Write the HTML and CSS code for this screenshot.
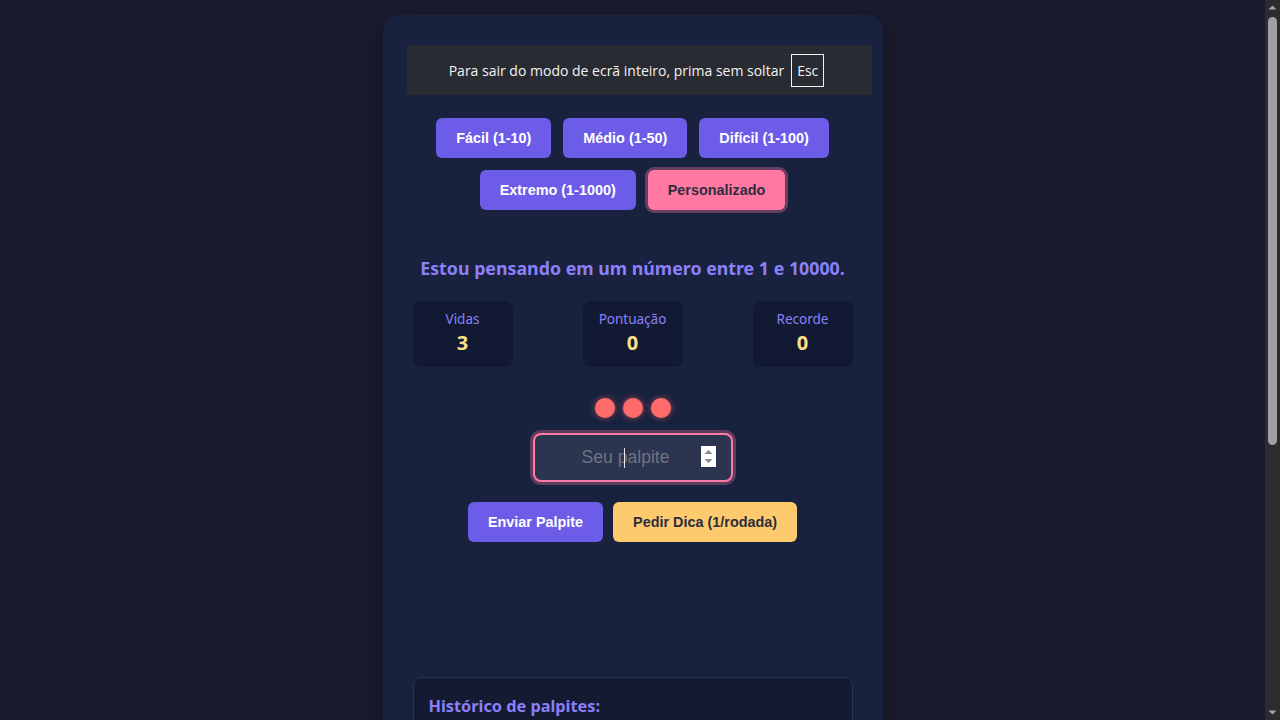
FILE: index.html
```html
<!DOCTYPE html>
<html lang="pt">
<head>
<meta charset="utf-8">
<title>Adivinhe o Número</title>
<link rel="stylesheet" href="styles.css">
</head>
<body>
<main class="card">
  <header class="card-head">
    <div class="fs-notice">Para sair do modo de ecrã inteiro, prima sem soltar <span class="key">Esc</span></div>
  </header>
  <div class="levels">
    <div class="level-row">
      <button class="btn btn-purple">Fácil (1-10)</button>
      <button class="btn btn-purple">Médio (1-50)</button>
      <button class="btn btn-purple">Difícil (1-100)</button>
    </div>
    <div class="level-row">
      <button class="btn btn-purple">Extremo (1-1000)</button>
      <button class="btn btn-pink">Personalizado</button>
    </div>
  </div>
  <p class="prompt">Estou pensando em um número entre 1 e 10000.</p>
  <div class="stats">
    <div class="stat"><span class="stat-label">Vidas</span><span class="stat-value">3</span></div>
    <div class="stat"><span class="stat-label">Pontuação</span><span class="stat-value">0</span></div>
    <div class="stat"><span class="stat-label">Recorde</span><span class="stat-value">0</span></div>
  </div>
  <div class="lives">
    <span class="life"></span><span class="life"></span><span class="life"></span>
  </div>
  <div class="guess-wrap">
    <div class="guess">
      <input class="guess-input" type="text" placeholder="Seu palpite">
      <span class="caret"></span>
      <span class="spinner">
        <svg width="15" height="21" viewBox="0 0 15 21"><rect width="15" height="21" fill="#fff"/><path d="M3.5 8 L7.5 4 L11.5 8 Z" fill="#8a8a8a"/><path d="M3.5 13 L7.5 17 L11.5 13 Z" fill="#8a8a8a"/></svg>
      </span>
    </div>
  </div>
  <div class="actions">
    <button class="btn btn-purple">Enviar Palpite</button>
    <button class="btn btn-yellow">Pedir Dica (1/rodada)</button>
  </div>
  <section class="history">
    <h2 class="history-title">Histórico de palpites:</h2>
    <ul class="history-list"></ul>
  </section>
</main>
<div class="scrollbar">
  <svg class="sb-arrow" width="15" height="15" viewBox="0 0 15 15"><path d="M3.5 9.5 L7.5 5.5 L11.5 9.5 Z" fill="#a3a3a3"/></svg>
  <div class="sb-track"><div class="sb-thumb"></div></div>
  <svg class="sb-arrow" width="15" height="15" viewBox="0 0 15 15"><path d="M3.5 5.5 L7.5 9.5 L11.5 5.5 Z" fill="#a3a3a3"/></svg>
</div>
</body>
</html>
```
FILE: styles.css
```css
html {
  background: #1b1b2f;
  scrollbar-width: none;
}
html::-webkit-scrollbar {
  display: none;
}
body {
  margin: 0;
  padding: 15px 15px 40px 0;
  background: #1b1b2f;
  font-family: "Noto Sans", "Liberation Sans", sans-serif;
  display: flex;
  justify-content: center;
}
.card {
  width: 500px;
  box-sizing: border-box;
  padding: 30px;
  background: #18213e;
  border-radius: 16px;
  box-shadow: 0 8px 24px rgba(0, 0, 0, 0.35);
  display: flex;
  flex-direction: column;
  align-items: stretch;
}
.card-head {
  height: 73px;
}
.fs-notice {
  position: fixed;
  left: 407px;
  top: 45px;
  width: 465px;
  height: 50px;
  background: #292b32;
  color: #f2f2f2;
  font-family: "Open Sans", "Noto Sans", sans-serif;
  font-size: 14px;
  display: flex;
  align-items: center;
  justify-content: center;
  gap: 7px;
  box-sizing: border-box;
  padding-right: 6px;
}
.key {
  border: 1px solid #f2f2f2;
  padding: 0 5px;
  height: 33px;
  display: flex;
  align-items: center;
  box-sizing: border-box;
}
.levels {
  display: flex;
  flex-direction: column;
  gap: 12px;
  align-items: center;
}
.level-row {
  display: flex;
  gap: 12px;
  justify-content: center;
}
.btn {
  height: 40px;
  padding: 0 20px;
  border: none;
  border-radius: 6px;
  font-family: "Liberation Sans", Arial, sans-serif;
  font-weight: 700;
  font-size: 14.4px;
  cursor: pointer;
}
.btn-purple {
  background: #6c5ce7;
  color: #fff;
}
.btn-pink {
  background: #ff79a2;
  color: #2d2d3f;
  box-shadow: 0 0 0 3px rgba(255, 121, 162, 0.35);
}
.btn-yellow {
  background: #fdcb6e;
  color: #2d2d3f;
}
.prompt {
  margin: 45px 0 0;
  text-align: center;
  color: #8b80f9;
  font-family: "Noto Sans", sans-serif;
  font-weight: 700;
  font-size: 17.8px;
  line-height: 26px;
}
.stats {
  display: flex;
  justify-content: space-between;
  margin-top: 20px;
}
.stat {
  width: 100px;
  height: 66px;
  box-sizing: border-box;
  padding-top: 8px;
  background: #121a33;
  border-radius: 8px;
  display: flex;
  flex-direction: column;
  align-items: center;
}
.stat-label {
  color: #8b80f9;
  font-size: 13.5px;
  line-height: 20px;
}
.stat-value {
  color: #ffe08a;
  font-weight: 700;
  font-size: 20px;
  line-height: 27px;
}
.lives {
  display: flex;
  justify-content: center;
  gap: 8px;
  margin-top: 31px;
}
.life {
  width: 20px;
  height: 20px;
  border-radius: 50%;
  background: #ff6b6b;
  box-shadow: 0 0 6px rgba(255, 107, 107, 0.6);
}
.guess-wrap {
  display: flex;
  justify-content: center;
  margin-top: 15px;
}
.guess {
  position: relative;
  width: 200px;
  height: 49px;
  box-sizing: border-box;
  border: 2px solid #ff79a2;
  border-radius: 8px;
  background: #2c3550;
  box-shadow: 0 0 0 3px rgba(255, 121, 162, 0.3);
}
.guess-input {
  width: 100%;
  height: 100%;
  box-sizing: border-box;
  border: none;
  background: transparent;
  outline: none;
  padding: 0 28px 0 14px;
  text-align: center;
  font-family: "Liberation Sans", Arial, sans-serif;
  font-size: 17.6px;
  color: #ddd;
}
.guess-input::placeholder {
  color: #70737f;
}
.caret {
  position: absolute;
  left: 89px;
  top: 13px;
  width: 1px;
  height: 20px;
  background: #e6e6e6;
}
.spinner {
  position: absolute;
  right: 15px;
  top: 11px;
  width: 15px;
  height: 21px;
  display: block;
}
.spinner svg {
  display: block;
}
.actions {
  display: flex;
  justify-content: center;
  gap: 10px;
  margin-top: 20px;
}
.history {
  margin-top: 135px;
  background: #131a31;
  border: 1px solid #283150;
  border-radius: 8px;
  padding: 16px 15px 40px;
}
.history-title {
  margin: 0;
  color: #8b80f9;
  font-family: "Noto Sans", sans-serif;
  font-weight: 700;
  font-size: 16.3px;
  line-height: 24px;
}
.history-list {
  margin: 0;
  padding: 0;
  list-style: none;
  min-height: 60px;
}
.scrollbar {
  position: fixed;
  top: 0;
  right: 0;
  width: 15px;
  height: 720px;
  background: #2c2c2c;
  display: flex;
  flex-direction: column;
}
.sb-arrow {
  display: block;
  flex: none;
}
.sb-track {
  flex: 1;
  position: relative;
}
.sb-thumb {
  position: absolute;
  left: 3px;
  top: 2px;
  width: 9px;
  height: 428px;
  border-radius: 5px;
  background: #9f9f9f;
}
```
